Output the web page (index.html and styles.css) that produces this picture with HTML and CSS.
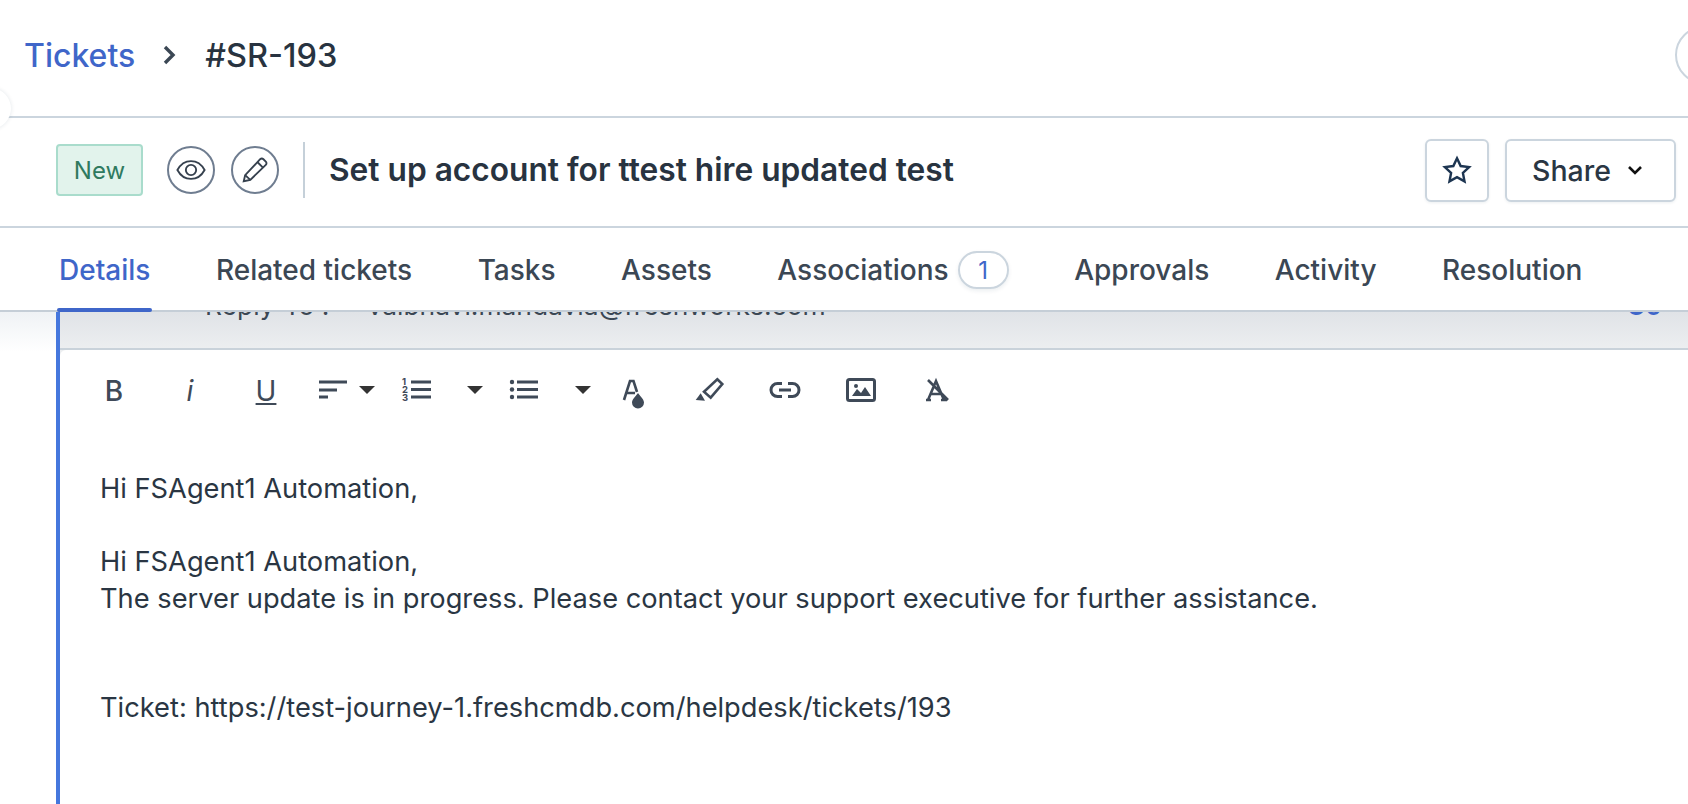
FILE: index.html
```html
<!DOCTYPE html>
<html lang="en">
<head>
  <meta charset="UTF-8">
  <title>Ticket #SR-193</title>
  <link rel="stylesheet" href="styles.css">
</head>
<body>
  <div class="edge-handle"></div>

  <header class="topbar">
    <a class="crumb-link">Tickets</a>
    <svg class="crumb-sep" viewBox="0 0 16 20"><path d="M3 2l8 8-8 8"/></svg>
    <span class="crumb-current">#SR-193</span>
    <div class="avatar"></div>
  </header>

  <div class="titlebar">
    <span class="status">New</span>
    <button class="round-btn first">
      <svg viewBox="0 0 32 32"><path d="M1.5 16C5 9.5 10 6.5 16 6.5S27 9.5 30.5 16C27 22.500 22 25.500 16 25.500S5 22.500 1.500 16z"/><circle cx="16" cy="16" r="5.500"/></svg>
    </button>
    <button class="round-btn">
      <svg viewBox="0 0 32 32"><path d="M4 28l1.500-6.500L21.500 4.500c1-1 2.500-1 3.500 0l2.500 2.500c1 1 1 2.500 0 3.500L11 26.500z"/><path d="M18.500 7.500l6 6M5.500 21.500l5.500 5"/></svg>
    </button>
    <div class="divider"></div>
    <h1 class="ticket-title">Set up account for ttest hire updated test</h1>
    <button class="star-btn">
      <svg viewBox="0 0 32 32"><path d="M16 3.500l3.900 8.300 9 1.100-6.600 6.200 1.700 9L16 23.600l-8 4.500 1.700-9-6.600-6.200 9-1.100z"/></svg>
    </button>
    <button class="share-btn">Share
      <svg viewBox="0 0 16 10"><path d="M2 2l6 6 6-6"/></svg>
    </button>
  </div>

  <nav class="tabs">
    <a class="tab active">Details</a>
    <a class="tab">Related tickets</a>
    <a class="tab">Tasks</a>
    <a class="tab">Assets</a>
    <a class="tab">Associations<span class="count">1</span></a>
    <a class="tab">Approvals</a>
    <a class="tab">Activity</a>
    <a class="tab">Resolution</a>
  </nav>

  <main class="content">
    <div class="gutter"></div>
    <section class="thread">
      <div class="reply-head">
        <div class="reply-row">
          <span>Reply-To :</span>
          <span class="reply-mail">vaibhavi.mandavia@freshworks.com</span>
          <span class="cc">Cc</span>
        </div>
      </div>
      <div class="editor">
        <div class="toolbar">
          <span class="tool glyph-b">B</span>
          <span class="tool glyph-i">i</span>
          <span class="tool glyph-u mr-35"><u>U</u></span>
          <svg class="tool mr-2" viewBox="0 0 32 32"><path class="line" d="M2 7h28M2 15h18M2 22h9"/></svg>
          <svg class="tool mr-18" viewBox="0 0 32 32"><path class="caret" d="M8 11h16l-8 8z"/></svg>
          <svg class="tool mr-26" viewBox="0 0 32 32"><text class="nums" x="1" y="10">1</text><text class="nums" x="1" y="18">2</text><text class="nums" x="1" y="26">3</text><path class="line" d="M10 7h20M10 14.500h20M10 22h20"/></svg>
          <svg class="tool mr-18" viewBox="0 0 32 32"><path class="caret" d="M8 11h16l-8 8z"/></svg>
          <svg class="tool mr-26" viewBox="0 0 32 32"><circle class="dot" cx="3" cy="7" r="2.200"/><circle class="dot" cx="3" cy="14.500" r="2.200"/><circle class="dot" cx="3" cy="22" r="2.200"/><path class="line" d="M8 7h21M8 14.500h21M8 22h21"/></svg>
          <svg class="tool mr-18" viewBox="0 0 32 32"><path class="caret" d="M8 11h16l-8 8z"/></svg>
          <svg class="tool" viewBox="0 0 32 32"><path class="thin" d="M7 25l6-19h3.500L20 17M10 18h8"/><path class="dot" d="M21 18c-1 2-6 6-6 9.500a6 6 0 0 0 12 0c0-3.500-5-7.500-6-9.500z"/></svg>
          <svg class="tool" viewBox="0 0 32 32"><path class="thin" d="M24.300 4.300l5 4.700-11.600 13.700-6.700-6z"/><path class="dot" d="M2.700 25l5-6.700 4.300 7.400z"/></svg>
          <svg class="tool" viewBox="0 0 32 32"><path class="line" d="M13 8.500H8.500a6.500 6.500 0 0 0 0 13H13M19 8.500h4.500a6.500 6.500 0 0 1 0 13H19M10 15h12"/></svg>
          <svg class="tool" viewBox="0 0 32 32"><rect class="line" x="2.500" y="4.500" width="27" height="21" rx="2"/><circle class="dot" cx="11" cy="11" r="2"/><path class="dot" d="M7 21l5-7 4 4 4-6 6 9z"/></svg>
          <svg class="tool" viewBox="0 0 32 32"><path class="thin" d="M7 25l8-19 8 19M5 25h5M20 25h6M10 19h10M7 5l20 20"/></svg>
        </div>
        <div class="body-text">
          <p>Hi FSAgent1 Automation,</p>
          <p>&nbsp;</p>
          <p>Hi FSAgent1 Automation,</p>
          <p>The server update is in progress. Please contact your support executive for further assistance.</p>
          <p>&nbsp;</p>
          <p>&nbsp;</p>
          <p>Ticket: https://test-journey-1.freshcmdb.com/helpdesk/tickets/193</p>
        </div>
      </div>
    </section>
  </main>
</body>
</html>
```

FILE: styles.css
```css
* {
  box-sizing: border-box;
}

html, body {
  height: 100%;
}

body {
  margin: 0;
  position: relative;
  overflow: hidden;
  background: #fff;
  color: #2a3643;
  font-family: 'Inter', sans-serif;
}

button {
  font-family: inherit;
  background: #fff;
  cursor: pointer;
  padding: 0;
}

svg {
  overflow: visible;
}

.edge-handle {
  position: absolute;
  top: 88px;
  left: -30px;
  width: 41px;
  height: 41px;
  border-radius: 50%;
  background: #fff;
  box-shadow: 0 0 4px rgba(18, 52, 77, 0.12);
  z-index: 2;
}

/* top row */
.topbar {
  height: 118px;
  padding: 0 0 6px 24px;
  display: flex;
  align-items: center;
  border-bottom: 2px solid #cbd5de;
  font-size: 32px;
  font-weight: 500;
}

.crumb-link {
  color: #3f66c9;
}

.crumb-sep {
  width: 16px;
  height: 20px;
  margin: 0 27px 0 27px;
  fill: none;
  stroke: #3b4754;
  stroke-width: 3.400;
}

.crumb-current {
  color: #283340;
  font-size: 32.500px;
}

.avatar {
  width: 58px;
  height: 58px;
  margin-left: auto;
  margin-right: -45px;
  border: 2px solid #cbd5de;
  border-radius: 50%;
}

/* title row */
.titlebar {
  height: 110px;
  padding: 0 12px 4px 56px;
  display: flex;
  align-items: center;
  border-bottom: 2px solid #cbd5de;
}

.status {
  width: 87px;
  height: 52px;
  display: flex;
  align-items: center;
  justify-content: center;
  background: #e2f3ec;
  border: 2px solid #a9dccc;
  border-radius: 4px;
  color: #2f7a5f;
  font-size: 24px;
}

.round-btn {
  width: 48px;
  height: 48px;
  margin-left: 16px;
  display: flex;
  align-items: center;
  justify-content: center;
  border: 2px solid #6f7d90;
  border-radius: 50%;
}

.round-btn.first {
  margin-left: 24px;
}

.round-btn svg {
  width: 30px;
  height: 30px;
  fill: none;
  stroke: #36414e;
  stroke-width: 2;
}

.divider {
  width: 2px;
  height: 56px;
  margin: 0 24px 0 24px;
  background: #c5d0d9;
}

.ticket-title {
  flex: 1;
  margin: 0 0 2px;
  font-size: 31.700px;
  font-weight: 600;
  color: #283340;
}

.star-btn {
  width: 64px;
  height: 63px;
  margin-right: 16px;
  display: flex;
  align-items: center;
  justify-content: center;
  border: 2px solid #cbd5de;
  border-radius: 6px;
  box-shadow: 0 1px 3px rgba(18, 52, 77, 0.08);
}

.star-btn svg {
  width: 30px;
  height: 30px;
  fill: none;
  stroke: #1d3551;
  stroke-width: 2.600;
}

.share-btn {
  width: 171px;
  height: 63px;
  padding-right: 6px;
  display: flex;
  align-items: center;
  justify-content: center;
  gap: 16px;
  border: 2px solid #cbd5de;
  border-radius: 6px;
  box-shadow: 0 1px 3px rgba(18, 52, 77, 0.08);
  color: #2a3643;
  font-size: 28.500px;
  font-weight: 500;
}

.share-btn svg {
  width: 16px;
  height: 10px;
  fill: none;
  stroke: #111;
  stroke-width: 2.600;
}

/* tabs */
.tabs {
  height: 84px;
  padding: 2px 0 0 57px;
  display: flex;
  gap: 61.500px;
  border-bottom: 2px solid #c5ced7;
  position: relative;
  z-index: 1;
  background: #fff;
  font-size: 28px;
  font-weight: 500;
  color: #3b4754;
}

.tab {
  position: relative;
  padding: 0 2px;
  display: flex;
  align-items: center;
}

.tab.active {
  color: #3f66c9;
}

.tab.active::after {
  content: "";
  position: absolute;
  left: 0;
  right: 0;
  bottom: -2px;
  height: 4px;
  border-radius: 2px;
  background: #3f66c9;
}

.count {
  width: 51px;
  height: 38px;
  margin-left: 9px;
  display: flex;
  align-items: center;
  justify-content: center;
  border: 2px solid #cbd5de;
  border-radius: 19px;
  box-shadow: 0 2px 4px rgba(18, 52, 77, 0.08);
  color: #3f66c9;
  font-size: 24px;
  font-weight: 400;
}

/* reply area */
.content {
  height: 492px;
  display: flex;
}

.gutter {
  width: 56px;
  height: 40px;
  background: linear-gradient(#eff2f5, #fff);
}

.thread {
  flex: 1;
  min-width: 0;
  background: linear-gradient(#e0e3e7, #eceef0 36px);
  border-left: 4px solid #4577dd;
}

.reply-head {
  height: 38px;
  overflow: hidden;
  border-bottom: 2px solid #c9d2da;
}

.reply-row {
  margin-top: -23px;
  padding: 0 27px 0 145px;
  display: flex;
  font-size: 26.400px;
  line-height: 32px;
  color: #3b4754;
}

.reply-mail {
  margin-left: 38px;
}

.cc {
  margin-left: auto;
  color: #3f66c9;
  font-weight: 600;
}

.editor {
  height: 454px;
  background: #fff;
  border-top-left-radius: 6px;
}

.toolbar {
  height: 57px;
  padding: 25px 0 0 38px;
  display: flex;
  align-items: flex-start;
}

.tool {
  flex: none;
  width: 32px;
  height: 32px;
  margin-right: 44px;
  display: flex;
  align-items: center;
  justify-content: center;
  color: #3f4a58;
  font-size: 28px;
  line-height: 32px;
}

.mr-2 { margin-right: 2px; }
.mr-18 { margin-right: 18px; }
.mr-26 { margin-right: 26px; }
.mr-35 { margin-right: 35px; }

.glyph-b { font-weight: 500; }
.glyph-i { font-style: italic; }

.line {
  fill: none;
  stroke: #3f4a58;
  stroke-width: 3;
}

.thin {
  fill: none;
  stroke: #3f4a58;
  stroke-width: 2.600;
}

.dot {
  fill: #3f4a58;
}

.caret {
  fill: #333;
}

.nums {
  fill: #3f4a58;
  font-size: 9.500px;
  font-weight: 700;
}

.body-text {
  padding: 64px 0 0 40px;
  font-size: 27.250px;
  line-height: 36.500px;
  color: #2a3643;
}

.body-text p {
  margin: 0;
}
```
